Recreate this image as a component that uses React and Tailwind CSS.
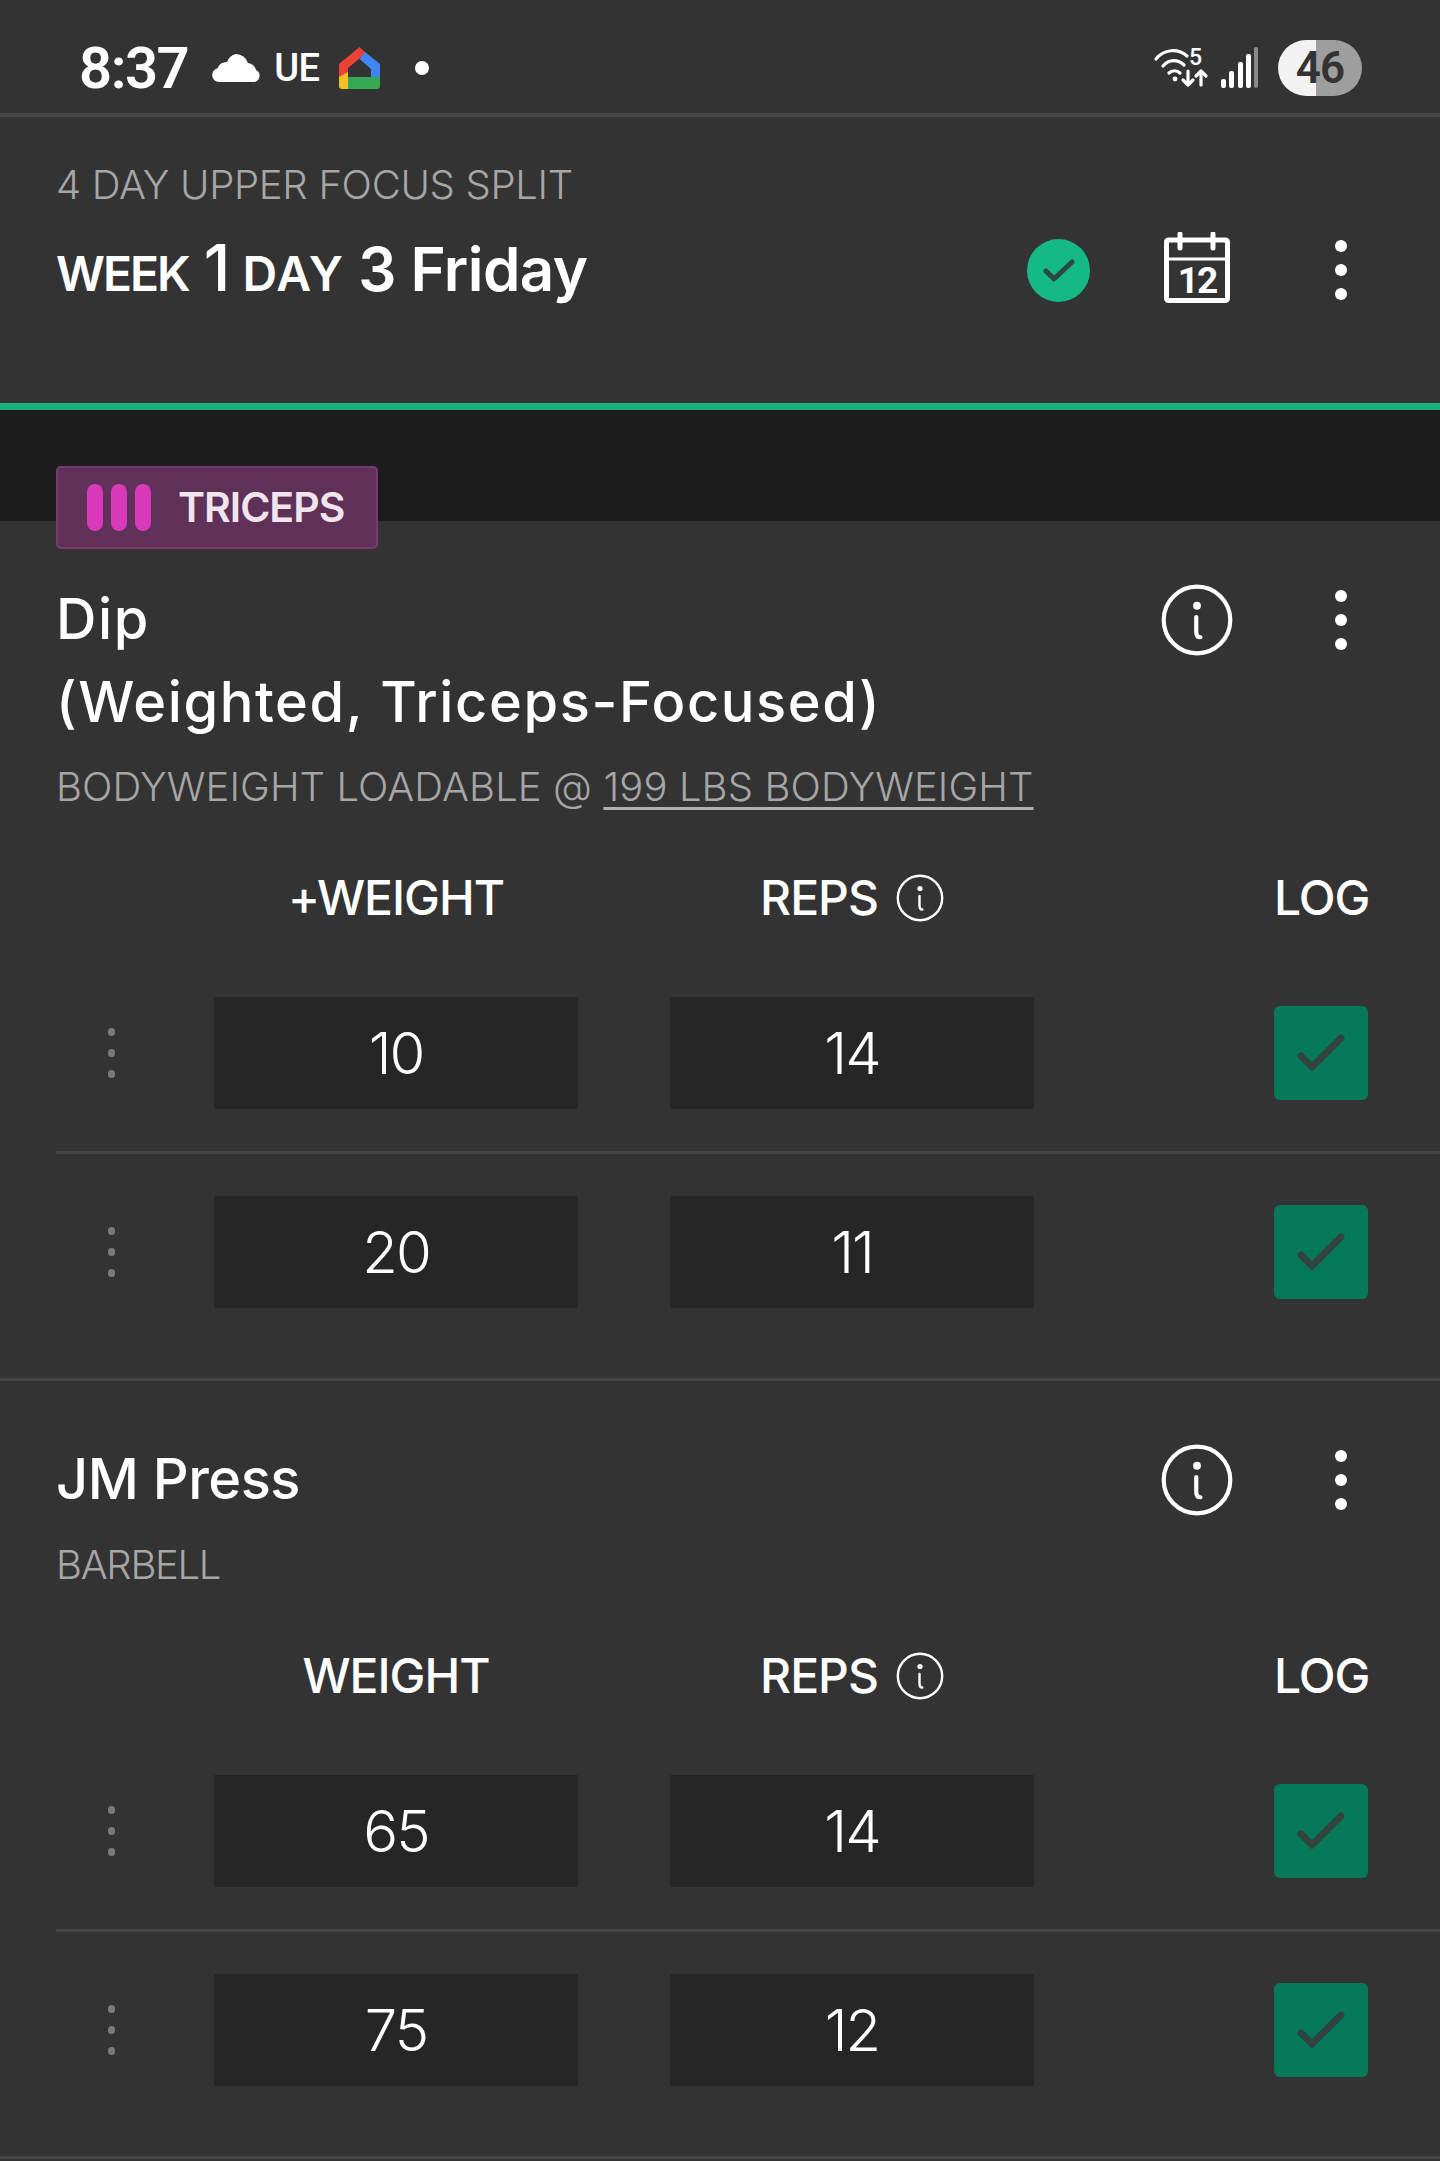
const font = { fontFamily: 'Inter, "Noto Sans", sans-serif' };

// Info circle, "i" has a little tail like the original icon font
function InfoIcon({ className, strokeWidth = 2.8 }) {
  return (
    <svg className={className} viewBox="0 0 48 48" fill="none" stroke="currentColor" strokeWidth={strokeWidth} strokeLinecap="round">
      <circle cx="24" cy="24" r="22.2" />
      <circle cx="24" cy="14.500" r="2.600" fill="currentColor" stroke="none" />
      <path d="M23.500 22v10c0 2.200 1 3.500 2.800 3.500" />
    </svg>
  );
}

function MoreDots() {
  return (
    <div className="flex flex-col gap-[12px] items-center w-[12px]">
      <span className="w-[12px] h-[12px] rounded-full bg-white"></span>
      <span className="w-[12px] h-[12px] rounded-full bg-white"></span>
      <span className="w-[12px] h-[12px] rounded-full bg-white"></span>
    </div>
  );
}

function StatusBar() {
  return (
    <div className="h-[117px] pt-[22px] border-b-[4px] border-[#454545] flex items-center pl-[79px] pr-[78px]">
      <span className="text-[58px] font-semibold leading-none text-white tracking-[-1.500px]" style={{ fontFamily: 'Roboto, sans-serif' }}>8:37</span>
      <svg className="w-[49px] h-[28px] ml-[24px]" viewBox="0 0 49 28" fill="#fff">
        <path d="M7 28a7 7 0 0 1-1.500-13.800A10 10 0 0 1 15 8a13 13 0 0 1 9-8 13 13 0 0 1 12 9 9.500 9.500 0 0 1 8 7 6.500 6.500 0 0 1-1 12z" />
      </svg>
      <span className="text-[38px] font-medium leading-none text-white ml-[13px] tracking-[-0.5px]" style={{ fontFamily: 'Roboto, sans-serif' }}>UE</span>
      <svg className="w-[41px] h-[42px] ml-[19px]" viewBox="0 0 41 42">
        <path d="M0 24 L9 24 L9 42 L3 42 Q0 42 0 39z" fill="#f6c026" />
        <path d="M9 30 H41 V39 Q41 42 38 42 H9z" fill="#34a853" />
        <path d="M0 17 L20.500 0 L27 6 L9 21 L9 25 L0 30z" fill="#ea4335" />
        <path d="M26 5 L41 17 L41 30 L32 30 L32 22 L20.500 12z" fill="#4285f4" />
      </svg>
      <span className="w-[14px] h-[14px] rounded-full bg-white ml-[35px]"></span>
      <div className="flex-1"></div>
      <svg className="w-[54px] h-[42px] overflow-visible" viewBox="0 0 54 42" fill="none" stroke="#fff" strokeWidth="3.200" strokeLinecap="round" strokeLinejoin="round">
        <path d="M2 12C10 2 24 1 33 9" />
        <path d="M9 19C15 12 24 12 30 18" />
        <path d="M15 26c3-3 8-3 11 0" />
        <circle cx="21" cy="32" r="2.400" fill="#fff" stroke="none" />
        <path d="M34 24v14M29 33l5 5 5-5" />
        <path d="M47 38V24M42 29l5-5 5 5" />
        <text x="35" y="18" fontSize="23" fontWeight="500" fill="#fff" stroke="none" fontFamily="Roboto, sans-serif">5</text>
      </svg>
      <svg className="w-[37px] h-[41px] ml-[13px]" viewBox="0 0 37 41">
        <rect x="0" y="32" width="5" height="9" rx="2" fill="#fff" />
        <rect x="8" y="24" width="5" height="17" rx="2" fill="#fff" />
        <rect x="17" y="15" width="5" height="26" rx="2" fill="#fff" />
        <rect x="25" y="7" width="5" height="34" rx="2" fill="#fff" />
        <rect x="33" y="0" width="4" height="41" rx="2" fill="#8a8a8a" />
      </svg>
      <div className="w-[84px] h-[56px] ml-[20px] rounded-full bg-[linear-gradient(90deg,#f2f2f2_45%,#9e9e9e_45%)] flex items-center justify-center text-[44px] font-semibold text-[#333] leading-none tracking-[-1px]" style={{ fontFamily: 'Roboto, sans-serif' }}>
        46
      </div>
    </div>
  );
}

function WorkoutHeader() {
  return (
    <div className="h-[286px] pl-[56px] pr-[93px] pt-[47px] flex justify-between">
      <div>
        <div className="text-[40px] leading-[42px] text-[#a6a6a6] font-light tracking-[-0.3px] whitespace-nowrap">4 DAY UPPER FOCUS SPLIT</div>
        <div className="flex items-baseline mt-[32px] text-white font-semibold leading-[60px] whitespace-nowrap">
          <span className="text-[48px] tracking-[-2px]">WEEK</span>
          <span className="text-[64px] ml-[15px] font-medium tracking-[-3px]">1</span>
          <span className="text-[48px] ml-[15px] tracking-[1.200px]">DAY</span>
          <span className="text-[60px] ml-[14px]">3</span>
          <span className="text-[60px] ml-[14px] tracking-[-0.5px]">Friday</span>
        </div>
      </div>
      <div className="flex items-center h-[112px] mt-[50px]">
        <div className="w-[63px] h-[63px] rounded-full bg-[#14b985] flex items-center justify-center">
          <svg className="w-[32px] h-[24px]" viewBox="0 0 32 24" fill="none" stroke="#2b4a3f" strokeWidth="5" strokeLinecap="round" strokeLinejoin="round">
            <path d="M3 13l8 8L29 4" />
          </svg>
        </div>
        <svg className="w-[66px] h-[71px] ml-[74px] mb-[6px]" viewBox="0 0 66 71" fill="none" stroke="#fff" strokeWidth="5">
          <rect x="2.500" y="8" width="61" height="60.500" rx="2" />
          <path d="M2 27h62" strokeWidth="3" />
          <path d="M16 2v14M49 2v14" strokeLinecap="round" strokeWidth="5" />
          <text x="33" y="61" textAnchor="middle" fontSize="37" fontWeight="700" letterSpacing="-2" fill="#fff" stroke="none" fontFamily="Roboto, sans-serif">12</text>
        </svg>
        <div className="ml-[105px]">
          <MoreDots />
        </div>
      </div>
    </div>
  );
}

function SetRow({ weight, reps, last }) {
  return (
    <div className={'ml-[56px] flex items-center ' + (last ? 'pt-[42px] pb-[70px]' : 'pt-[42px] pb-[42px] border-b-[3px] border-[#454545]')}>
      <div className="w-[158px] flex justify-start">
        <div className="ml-[52px] flex flex-col gap-[13px]">
          <span className="w-[7px] h-[8px] rounded-full bg-[#7a7a7a]"></span>
          <span className="w-[7px] h-[8px] rounded-full bg-[#7a7a7a]"></span>
          <span className="w-[7px] h-[8px] rounded-full bg-[#7a7a7a]"></span>
        </div>
      </div>
      <div className="w-[364px] h-[112px] bg-[#262626] flex items-center justify-center text-[58px] font-light text-white tracking-[-2px]">{weight}</div>
      <div className="w-[364px] h-[112px] ml-[92px] bg-[#262626] flex items-center justify-center text-[58px] font-light text-white tracking-[-2px]">{reps}</div>
      <div className="w-[94px] h-[94px] ml-[240px] rounded-[6px] bg-[#05795a] flex items-center justify-center">
        <svg className="w-[48px] h-[38px]" viewBox="0 0 48 38" fill="none" stroke="#31433e" strokeWidth="7" strokeLinecap="round" strokeLinejoin="round">
          <path d="M4 22l11 11L44 4" />
        </svg>
      </div>
    </div>
  );
}

function Exercise({ title, titleClass, equipment, equipmentClass, weightLabel, sets, className, children }) {
  return (
    <div className={className}>
      {children}
      <div className="pl-[56px] pr-[93px] flex justify-between items-start">
        <div className={'text-[56px] leading-[83px] font-medium text-white whitespace-nowrap ' + titleClass}>
          {title.map(line => <div key={line}>{line}</div>)}
        </div>
        <div className="flex items-center h-[83px]">
          <InfoIcon className="w-[72px] h-[72px] text-white" />
          <div className="ml-[102px]">
            <MoreDots />
          </div>
        </div>
      </div>
      <div className={'px-[56px] text-[40px] leading-[50px] font-light text-[#a6a6a6] whitespace-nowrap ' + equipmentClass}>{equipment}</div>
      <div className="ml-[56px] mt-[61px] h-[50px] flex items-center text-[48px] font-medium text-white tracking-[-1px] leading-none">
        <div className="w-[158px]"></div>
        <div className="w-[364px] text-center">{weightLabel}</div>
        <div className="w-[364px] ml-[92px] flex items-center justify-center">
          <span>REPS</span>
          <InfoIcon className="w-[48px] h-[48px] ml-[18px]" strokeWidth={2.4} />
        </div>
        <div className="w-[94px] ml-[240px] text-center whitespace-nowrap">LOG</div>
      </div>
      <div className="mt-[32px]">
        {sets.map((s, i) => (
          <SetRow key={i} weight={s[0]} reps={s[1]} last={i === sets.length - 1} />
        ))}
      </div>
    </div>
  );
}

export default function App() {
  return (
    <div className="min-h-[2161px] bg-[#333333]" style={font}>
      <StatusBar />
      <WorkoutHeader />
      <div className="h-[7px] bg-[#1bb07f]"></div>
      <div className="h-[111px] bg-[#1c1c1c]"></div>

      <Exercise
        title={['Dip', '(Weighted, Triceps-Focused)']}
        titleClass="tracking-[1.600px]"
        equipment={<>BODYWEIGHT LOADABLE @ <span className="underline decoration-[3px] decoration-[#b0b0b0] underline-offset-[6px]">199 LBS BODYWEIGHT</span></>}
        equipmentClass="mt-[18px] tracking-[0.100px]"
        weightLabel="+WEIGHT"
        sets={[['10', '14'], ['20', '11']]}
        className="border-b-[3px] border-[#454545]"
      >
        <div className="relative -mt-[55px] ml-[56px] mb-[29px] w-[322px] h-[83px] rounded-[5px] border-[2px] border-[#7a3a70] bg-[#5f3058] flex items-center pl-[29px]">
          <span className="w-[16px] h-[47px] rounded-full bg-[#d93ab9]"></span>
          <span className="w-[16px] h-[47px] rounded-full bg-[#d93ab9] ml-[8px]"></span>
          <span className="w-[16px] h-[47px] rounded-full bg-[#d93ab9] ml-[8px]"></span>
          <span className="ml-[27px] text-[41px] font-semibold text-[#f0e4ee] tracking-[-1px] leading-none">TRICEPS</span>
        </div>
      </Exercise>

      <Exercise
        title={['JM Press']}
        titleClass="tracking-[-0.500px]"
        equipment="BARBELL"
        equipmentClass="mt-[19px] tracking-[-1.300px]"
        weightLabel="WEIGHT"
        sets={[['65', '14'], ['75', '12']]}
        className="pt-[57px] border-b-[3px] border-[#454545]"
      />
    </div>
  );
}
